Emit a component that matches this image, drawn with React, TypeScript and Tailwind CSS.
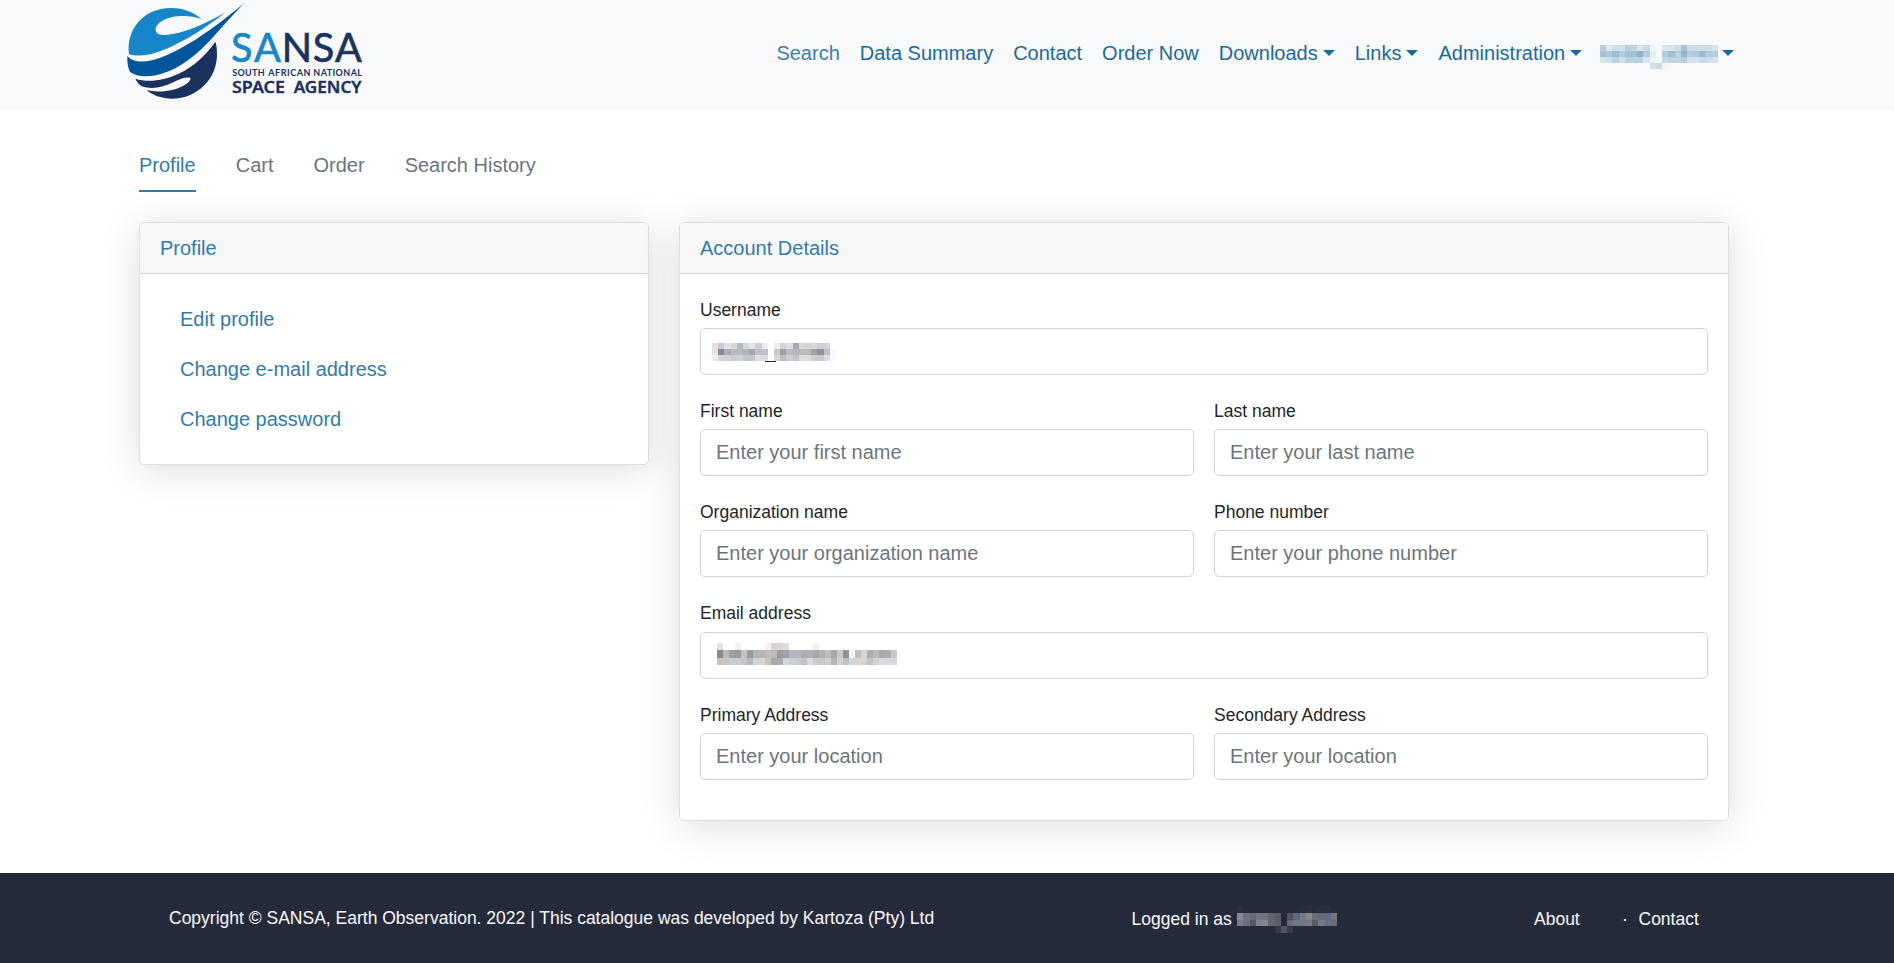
import React from "react";

type MosaicProps = { cells: string[]; cw: number; heights: number[]; className?: string };

/* Each row is a space separated list of hex colours; "-" leaves the cell empty. */
function Mosaic({ cells, cw, heights, className }: MosaicProps) {
  const rows = cells.map((r) => r.split(" "));
  const w = rows[0].length * cw;
  const h = heights.reduce((a, b) => a + b, 0);
  let y = 0;
  return (
    <svg width={w} height={h} viewBox={`0 0 ${w} ${h}`} shapeRendering="crispEdges" className={className} aria-hidden="true">
      {rows.map((row, i) => {
        const top = y;
        y += heights[i];
        return row.map((c, j) =>
          c === "-" ? null : <rect key={`${i}-${j}`} x={j * cw} y={top} width={cw} height={heights[i]} fill={`#${c}`} />
        );
      })}
    </svg>
  );
}

const NAV_USER = [
  "b9cfde dde7ef d0dfe9 d0dfe9 b5d0df c1d5e1 dbe7ee cbdce7 f3f7fa - dae6ed d5e5ed cbdde8 a9c1d6 cbdce7 cbdce7 cddde8 cbdce7 d8e4ec",
  "a7c4d7 adcadb 9bbdd1 b1cddd a3c3d6 9fc1d5 8ab2cf b6cddc e1eff6 - b4cddb 9fbfd2 b4d3e0 9bb4cb b0cddd abcadb 94bfd8 b0cbdb b5cbda",
  "d5e3eb cfdfe8 c0d4e0 d0e0e9 b9d0dd bbd1de b5cfdd dae5ec ecf3f8 - c6d8e3 bed3df bfd4e0 b7ccda d4e1e9 d4e1e9 c4dbe7 cfdee7 d7e3ea",
  "- - - - - - - - d3e0e8 c9dae4 f1f5f8 - - - - - - - -",
];

const USERNAME = [
  "ecdfd5 c2c9d4 e1e1e3 d3d7da b7babd d8d6d5 e1e5e7 cdcdce eaedf3 - ececea d0d3da dedcda a5aaaf d5d5d5 d2d4d3 dcd5d2 cad1da d2d4d9 -",
  "efe2d8 7e8b9b aeaba9 b7bbbf b9bdc0 b6b4b3 a6a6a6 bfc0c3 bec1c7 - c9c7c6 9b9da7 bbbbbc b6b6b7 bababa bbbbbb aea199 8b94a3 c8c0bb f1f8ff",
  "f5ede5 d1d4da ced1d7 c8cbd1 d0d1d3 c4c4c5 c5c5c6 dedee0 dddee3 - dad8d6 bbbdc2 cecfd1 c2c5ca dddddf dddddd d2cdc9 c4cbd2 e0dfdc f8fbff",
];

const EMAIL = [
  "dfdfe0 - - f0f0f0 - - - - f1f1f1 d4d5d7 d3d6d8 dcdee0 - - - - f0f0f0 - - - - - - - - - - - - -",
  "8b8a88 b8b8b9 9fa1a1 959da2 c6c2be 939ba3 b5b5b8 b5b6ba c2beb7 b6bcc1 a29a98 9ca6af b3b7c0 bab6b5 a9adb7 adb0b2 a5a8aa b1b1b0 bbbcbe a9a4a4 c8c9ca 919394 edf6ff c0bdbc d2d4d5 adaeb5 bab9b1 a8aaad abadb0 c4c8d2",
  "c6c3c0 c7c7c7 c9cacd cccccd c5c5c8 b8b9be cfd2d7 d5d5d5 c9c2bb a5a9ad a9adb5 d5d6d7 cfcfcf c8cbce bfc3c8 d8d9da c8cace c9c8c7 cecfd0 b2b4b9 d1d1d2 c5c0bc d0d9e2 d6d3d0 d4d4d4 c4c3c2 d2d2cc d8dadd d6d8db d6d7da",
];

const FOOTER_USER = [
  "2b2f3f - - - - - - - - - 292d3d 2c2f3f - 2c2f3f 2c2f3e -",
  "868994 6d707b 666974 74767f 71747e 62656f 595c69 - 4d5160 626776 6f7c8b 898681 686e7a 646b78 5e6b8a 76737a",
  "777b87 6d6f7a 555865 7c8593 858690 63656f 5b5e6b - 666a78 717682 727784 797a7d 555b68 737986 616d8b 6c666f",
  "- - - - - - 34394a 50566a 363a4a - - - - - - -",
];

function Logo() {
  return (
    <svg width="270" height="110" viewBox="0 0 810 330" className="block shrink-0" role="img" aria-label="SANSA">
      <path
        fill="#1686c9"
        d="M57 163 C48 90 98 24 184 24 C222 24 254 38 275 58 C258 50 240 48 218 48 C176 48 136 66 137 90 C138 106 162 107 184 103 C238 94 292 66 345 38 C286 84 224 124 162 149 C120 166 86 171 57 163Z"
      />
      <path
        fill="#00559b"
        d="M402 10 C364 42 312 84 256 119 C192 158 128 190 82 184 C70 182 58 176 52 168 C51 186 54 204 60 216 C80 231 116 232 152 222 C212 206 268 158 312 108 C346 70 376 38 402 10Z"
      />
      <path
        fill="#1b315e"
        d="M316 125 C288 166 250 200 206 221 C162 242 112 248 76 236 C80 246 88 254 95 259 C126 270 160 262 190 247 C210 237 226 231 240 233 C248 240 224 258 200 266 C172 275 138 277 110 271 C130 287 156 296 186 296 C262 296 322 236 321 162 C321 148 320 136 316 125Z"
      />
      <g fontFamily="Lato, sans-serif" fill="#1b315e">
        <text x="363 432 515 608 675" y="187" fontSize="119" fontWeight="400" stroke="#1b315e" strokeWidth="2">
          <tspan fill="#1686c9" stroke="#1686c9">SA</tspan>NSA
        </text>
        <g fontSize="27" fontWeight="700">
          <text x="367" y="228" textLength="97" lengthAdjust="spacing">SOUTH</text>
          <text x="475" y="228" textLength="126" lengthAdjust="spacing">AFRICAN</text>
          <text x="610" y="228" textLength="146" lengthAdjust="spacing">NATIONAL</text>
        </g>
      </g>
      <g fontFamily="Noto Sans, sans-serif" fontSize="48" fontWeight="600" fill="#1b315e" stroke="#1b315e" strokeWidth="1">
        <text x="366" y="279" textLength="159" lengthAdjust="spacingAndGlyphs">SPACE</text>
        <text x="551" y="279" textLength="204" lengthAdjust="spacingAndGlyphs">AGENCY</text>
      </g>
    </svg>
  );
}

function Caret() {
  return <span className="inline-block h-0 w-0 border-x-[6px] border-t-[6px] border-x-transparent border-t-current" />;
}

function NavLink({ label, menu, light }: { label: string; menu?: boolean; light?: boolean }) {
  return (
    <a href="#" className={`flex items-center gap-[5px] leading-[30px] ${light ? "text-[#3a80ac]" : "text-[#1b6a9c]"}`}>
      {label}
      {menu && <Caret />}
    </a>
  );
}

function Card({ title, className, children }: { title: string; className: string; children: React.ReactNode }) {
  return (
    <section className={`rounded-[5px] border border-[#dfdfdf] bg-white shadow-[0_5px_40px_rgba(0,0,0,0.14)] ${className}`}>
      <h2 className="h-[51px] rounded-t-[4px] border-b border-[#d8d8d8] bg-[#f7f7f7] px-5 py-[10px] leading-[30px] text-[#327ba9]">{title}</h2>
      {children}
    </section>
  );
}

function Field({ label, placeholder, wide, children }: { label: string; placeholder?: string; wide?: boolean; children?: React.ReactNode }) {
  return (
    <div className={wide ? "col-span-2" : ""}>
      <label className="mb-[5px] block text-[17.5px] leading-[26.25px] text-[#212529]">{label}</label>
      {children ? (
        <div className="h-[47px] rounded-[5px] border border-[#ced4da] bg-white">{children}</div>
      ) : (
        <input
          className="block h-[47px] w-full rounded-[5px] border border-[#ced4da] bg-white px-[15px] text-xl leading-[30px] placeholder:text-[#6c757d]"
          placeholder={placeholder}
        />
      )}
    </div>
  );
}

export default function App() {
  return (
    <div className="flex h-[963px] w-[1894px] flex-col overflow-hidden bg-white font-['Liberation_Sans',Arial,sans-serif] text-xl">
      <header className="flex h-[110px] shrink-0 bg-[#f8f9fb] pl-[110px]">
        <Logo />
        <nav className="mt-[38px] ml-[396.4px] flex h-[30px] gap-5">
          <NavLink label="Search" light />
          <NavLink label="Data Summary" />
          <NavLink label="Contact" />
          <NavLink label="Order Now" />
          <NavLink label="Downloads" menu />
          <NavLink label="Links" menu />
          <NavLink label="Administration" menu />
          <a href="#" className="-ml-[2px] flex h-[30px] items-center gap-1 text-[#1b6a9c]">
            <Mosaic cells={NAV_USER} cw={118 / 19} heights={[6, 6, 6, 6]} className="mt-2" />
            <Caret />
          </a>
        </nav>
      </header>

      <main className="flex h-[763px] shrink-0 flex-col pl-[139px]">
        <div className="mt-10 flex h-[42px] gap-10 leading-[30px] text-[#6c757d]">
          <a href="#" className="border-b-2 border-[#2b7cab] text-[#2f7dac]">Profile</a>
          <a href="#">Cart</a>
          <a href="#">Order</a>
          <a href="#">Search History</a>
        </div>
        <div className="mt-[30px] flex items-start gap-[30px]">
          <Card title="Profile" className="h-[243px] w-[510px]">
            <ul className="flex flex-col gap-5 px-10 pt-[30px] leading-[30px] text-[#327ba9]">
              <li><a href="#">Edit profile</a></li>
              <li><a href="#">Change e-mail address</a></li>
              <li><a href="#">Change password</a></li>
            </ul>
          </Card>
          <Card title="Account Details" className="h-[599px] w-[1050px]">
            <form className="grid grid-cols-2 gap-x-5 gap-y-[23px] px-5 pt-[22.5px]">
              <Field label="Username" wide>
                <div className="flex items-end pt-[14px] pl-[11px]">
                  <Mosaic cells={USERNAME} cw={6.2} heights={[6, 6, 6]} />
                </div>
                <div className="ml-[64px] h-px w-[11px] bg-[#212529]" />
              </Field>
              <Field label="First name" placeholder="Enter your first name" />
              <Field label="Last name" placeholder="Enter your last name" />
              <Field label="Organization name" placeholder="Enter your organization name" />
              <Field label="Phone number" placeholder="Enter your phone number" />
              <Field label="Email address" wide>
                <Mosaic cells={EMAIL} cw={6} heights={[7, 8, 7]} className="mt-[10px] ml-4" />
              </Field>
              <Field label="Primary Address" placeholder="Enter your location" />
              <Field label="Secondary Address" placeholder="Enter your location" />
            </form>
          </Card>
        </div>
      </main>

      <footer className="flex h-[90px] shrink-0 items-start bg-[#262b3c] pt-8 pl-[169px] text-[17.5px] leading-[26px] text-[#f8f9fa]">
        <p className="w-[962.5px]">Copyright © SANSA, Earth Observation. 2022 | This catalogue was developed by Kartoza (Pty) Ltd</p>
        <p className="mt-px flex w-[402.5px] gap-[5px]">
          Logged in as
          <Mosaic cells={FOOTER_USER} cw={6.25} heights={[7, 6.5, 6.5, 7]} />
        </p>
        <p className="mt-px w-[88px]">About</p>
        <p className="mt-px w-[16.5px]">·</p>
        <p className="mt-px">Contact</p>
      </footer>
    </div>
  );
}
